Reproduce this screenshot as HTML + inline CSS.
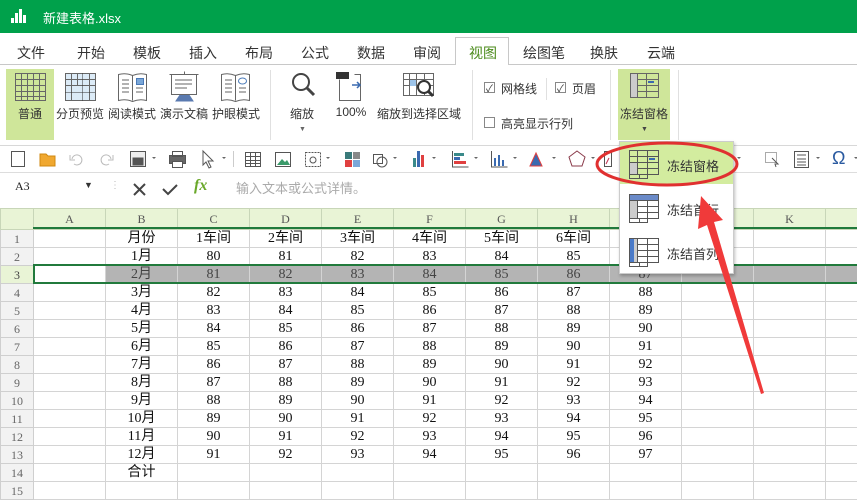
<!DOCTYPE html>
<html><head><meta charset="utf-8">
<style>
*{margin:0;padding:0;box-sizing:border-box}
body{width:857px;height:488px;overflow:hidden;background:#fff;font-family:"Liberation Sans","Noto Sans CJK SC",sans-serif;color:#333;position:relative}
.a{position:absolute}
.t{font-size:12px;color:#333;white-space:nowrap}
.tab{position:absolute;top:43px;font-size:14px;color:#333}
.lbl{position:absolute;top:105px;font-size:12px;white-space:nowrap;transform:translateX(-50%)}
table{position:absolute;left:0;top:208px;border-collapse:collapse;table-layout:fixed;width:897px}
td{border:1px solid #d4d4d4;height:18px;text-align:center;font-family:"Liberation Serif","Noto Sans CJK SC",serif;font-size:14px;color:#111;line-height:16px;padding:0;overflow:hidden}
tr.h td{height:21px;background:#e9f4d6;font-size:12px;color:#555;border-color:#c8d6b8}
td.rh{background:#f2f2f2;color:#666;font-size:12px;border-color:#cfcfcf}
tr.s td{background:#b4b4b4;color:#444}
tr.s td.w{background:#fff}
tr.s td.rh{background:#e9f4d6}
.ck{position:absolute;width:11px;height:11px;border:1px solid #888;background:#fff}
.sep{position:absolute;width:1px;background:#e0e0e0}
</style></head><body>
<div class="a" style="left:0;top:0;width:857px;height:33px;background:#00a14b"></div>
<svg class="a" style="left:11px;top:9px" width="18" height="14"><rect x="0" y="9" width="3" height="5" fill="#fff"/><rect x="4" y="4" width="3" height="10" fill="#fff"/><rect x="8" y="0" width="3" height="14" fill="#fff"/><rect x="12" y="6" width="3" height="8" fill="#fff"/></svg>
<div class="a" style="left:43px;top:8px;color:#fff;font-size:13px">新建表格.xlsx</div>
<div class="a" style="left:0;top:64px;width:857px;height:1px;background:#c8c8c8"></div>
<div class="a" style="left:455px;top:37px;width:54px;height:28px;background:#fff;border:1px solid #c8c8c8;border-bottom:none"></div>
<div class="tab" style="left:17px">文件</div><div class="tab" style="left:77px">开始</div><div class="tab" style="left:133px">模板</div><div class="tab" style="left:189px">插入</div><div class="tab" style="left:245px">布局</div><div class="tab" style="left:301px">公式</div><div class="tab" style="left:357px">数据</div><div class="tab" style="left:413px">审阅</div><div class="tab" style="left:469px;color:#4a8a1a">视图</div><div class="tab" style="left:523px">绘图笔</div><div class="tab" style="left:590px">换肤</div><div class="tab" style="left:647px">云端</div>
<div class="a" style="left:6px;top:69px;width:48px;height:71px;background:#cfe69a"></div>
<div class="a" style="left:618px;top:69px;width:52px;height:71px;background:#cfe69a"></div>
<div class="a" style="left:0;top:145px;width:857px;height:1px;background:#d8d8d8"></div>
<div class="sep" style="left:270px;top:70px;height:70px"></div>
<div class="sep" style="left:472px;top:70px;height:70px"></div>
<div class="sep" style="left:610px;top:70px;height:70px"></div>
<div class="sep" style="left:546px;top:78px;height:22px"></div>
<div class="sep" style="left:678px;top:70px;height:70px"></div>
<svg class="a" style="left:0;top:70px" width="857" height="36" fill="none" stroke="#666" stroke-width="1">
<g><rect x="15.5" y="3.5" width="30" height="27"/><path d="M15.5 9.5h30M15.5 15.5h30M15.5 21.5h30M15.5 26.5h30M21.5 3.5v27M27.5 3.5v27M33.5 3.5v27M39.5 3.5v27"/></g>
<g><rect x="65.5" y="3.5" width="30" height="27" fill="#dcebf7"/><path d="M65.5 9.5h30M65.5 15.5h30M71.5 3.5v27M89.5 3.5v27M77.5 3.5v12"/><path d="M65.5 22.5h30M82.5 3.5v27" stroke="#333" stroke-dasharray="1 1"/></g>
<g><path d="M118.5 4.5q7-2 14 1q7-3 14-1v26q-7-2-14 1q-7-3-14-1z"/><path d="M132.5 5.5v25M122 10h7M122 14h7M122 18h7M122 22h7M136 18h7M136 22h7"/><rect x="136.5" y="8.5" width="7" height="6" fill="#7aa7d8" stroke="#4a7ab8"/></g>
<g><path d="M169.5 4.5h29M171.5 4.5v20h25v-20M184.5 1.5v3M175 10h17M175 14h17M175 18h12"/><path d="M180 25l-4 6h17l-4-6" fill="#5a7ab0" stroke="#5a7ab0"/></g>
<g><path d="M221.5 4.5q7-2 14 1q7-3 14-1v26q-7-2-14 1q-7-3-14-1z"/><path d="M235.5 5.5v25M225 10h7M225 14h7M225 18h7M225 22h7M239 18h7M239 22h7"/><ellipse cx="242.5" cy="11" rx="4" ry="3" stroke="#4a7ab8"/></g>
<g stroke="#444" stroke-width="2"><circle cx="301" cy="12" r="8"/><path d="M307 18l7 7" stroke-width="3"/></g>
<g><rect x="336" y="2" width="13" height="7" fill="#333" stroke="none"/><path d="M339.5 9.5v21h21v-26h-6" /><path d="M352 15h8M357 12l3 3-3 3" stroke="#3a6ab0" stroke-width="1.5"/></g>
<g><rect x="403.5" y="3.5" width="30" height="22"/><path d="M403.5 9.5h30M403.5 15.5h30M409.5 3.5v22M416.5 3.5v22M424.5 3.5v22"/><rect x="410" y="10" width="6" height="6" fill="#9cc4ea" stroke="none"/><circle cx="424" cy="17" r="6" stroke="#333" stroke-width="2" fill="#fff"/><path d="M428 21l5 5" stroke="#333" stroke-width="3"/></g>
<g><rect x="630.5" y="3.5" width="28" height="24"/><path d="M630.5 9.5h28M630.5 15.5h28M630.5 21.5h28M637.5 3.5v24M646.5 3.5v24"/><rect x="630.5" y="3.5" width="7" height="24" fill="#ccc"/><path d="M648 12h6" stroke="#3a6ab0" stroke-width="2"/></g>
</svg>
<div class="lbl" style="left:30px">普通</div><div class="lbl" style="left:80px">分页预览</div><div class="lbl" style="left:132px">阅读模式</div><div class="lbl" style="left:184px">演示文稿</div><div class="lbl" style="left:236px">护眼模式</div>
<div class="lbl" style="left:302px">缩放</div><div class="lbl" style="left:351px">100%</div><div class="lbl" style="left:419px">缩放到选择区域</div><div class="lbl" style="left:644px">冻结窗格</div>
<div class="a" style="left:299px;top:126px;font-size:7px;color:#666">▼</div>
<div class="a" style="left:641px;top:126px;font-size:7px;color:#444">▼</div>
<div class="ck" style="left:484px;top:82px"></div><div class="a" style="left:486px;top:80px;font-size:10px">✓</div><div class="t a" style="left:501px;top:80px">网格线</div>
<div class="ck" style="left:555px;top:82px"></div><div class="a" style="left:557px;top:80px;font-size:10px">✓</div><div class="t a" style="left:572px;top:80px">页眉</div>
<div class="ck" style="left:484px;top:117px"></div><div class="t a" style="left:501px;top:115px">高亮显示行列</div>
<div class="a" style="left:0;top:172px;width:857px;height:1px;background:#ddd"></div>
<svg class="a" style="left:0;top:146px" width="857" height="26" fill="none" stroke="#555">
<path d="M11.5 5.5h13v15h-13z"/>
<path d="M40 8h6l2 2h7v10h-15z" fill="#f0a830" stroke="#d08810"/>
<path d="M72 13a5 5 0 1 1 2 5M70 9v5h5" stroke="#bbb"/><path d="M111 13a5 5 0 1 0-2 5M113 9v5h-5" stroke="#bbb"/>
<rect x="130.5" y="5.5" width="15" height="15" fill="#eee"/><rect x="133" y="12" width="10" height="7" fill="#555"/>
<path d="M152 11l2 2 2-2" fill="#666" stroke="none"/>
<rect x="169.5" y="9.5" width="16" height="8" fill="#666"/><rect x="172.5" y="5.5" width="10" height="5"/><rect x="172.5" y="15.5" width="10" height="6" fill="#fff"/>
<path d="M203 5l10 10h-5l3 6-2 1-3-6-3 3z"/><path d="M222 11l2 2 2-2" fill="#666" stroke="none"/>
<path d="M233.5 5v16" stroke="#ccc"/>
<rect x="245.5" y="6.5" width="15" height="14"/><path d="M245.5 10.5h15M245.5 14.5h15M245.5 17.5h15M250.5 6.5v14M255.5 6.5v14"/>
<rect x="275.5" y="6.5" width="15" height="14"/><path d="M277 19l5-6 3 3 2-2 3 5z" fill="#3a9a6a" stroke="none"/>
<rect x="305.5" y="6.5" width="15" height="14" stroke-dasharray="2 1"/><circle cx="313" cy="14" r="3"/><path d="M326 11l2 2 2-2" fill="#666" stroke="none"/>
<rect x="345" y="6" width="7" height="7" fill="#3a7a7a" stroke="none"/><rect x="353" y="6" width="7" height="7" fill="#888" stroke="none"/><rect x="345" y="14" width="7" height="7" fill="#e04040" stroke="none"/><rect x="353" y="14" width="7" height="7" fill="#7aa7d8" stroke="none"/>
<rect x="373.5" y="8.5" width="9" height="9"/><circle cx="382" cy="16" r="5"/><path d="M393 11l2 2 2-2" fill="#666" stroke="none"/>
<rect x="413" y="12" width="3" height="9" fill="#3a8a8a" stroke="none"/><rect x="417" y="5" width="3" height="16" fill="#3a6ab0" stroke="none"/><rect x="421" y="9" width="3" height="12" fill="#e04040" stroke="none"/><path d="M432 11l2 2 2-2" fill="#666" stroke="none"/>
<path d="M452.5 5v16h16"/><rect x="454" y="7" width="10" height="3" fill="#3a8a8a" stroke="none"/><rect x="454" y="11" width="6" height="3" fill="#3a6ab0" stroke="none"/><rect x="454" y="15" width="12" height="3" fill="#e04040" stroke="none"/><path d="M474 11l2 2 2-2" fill="#666" stroke="none"/>
<path d="M491.5 5v16h16"/><rect x="494" y="12" width="2" height="8" fill="#3a6ab0" stroke="none"/><rect x="498" y="9" width="2" height="11" fill="#3a6ab0" stroke="none"/><rect x="502" y="14" width="2" height="6" fill="#3a6ab0" stroke="none"/><path d="M513 11l2 2 2-2" fill="#666" stroke="none"/>
<path d="M530 20l6-13 6 13z" fill="#3a6ab0" stroke="#e04040"/><path d="M552 11l2 2 2-2" fill="#666" stroke="none"/>
<path d="M577 5l8 6-3 9h-10l-3-9z" stroke="#8a3a4a"/><path d="M591 11l2 2 2-2" fill="#666" stroke="none"/>
<path d="M604.5 5.5h7v15h-7z"/><path d="M606 18l3-6" stroke="#c03050"/>
<path d="M737 11l2 2 2-2" fill="#666" stroke="none"/>
<rect x="765.5" y="6.5" width="11" height="10" stroke-dasharray="1 1"/><path d="M772 12l6 6-3 0 1 3" />
<rect x="794.5" y="5.5" width="14" height="16"/><path d="M797 9h9M797 13h9M797 16h9M797 19h9"/><path d="M816 11l2 2 2-2" fill="#666" stroke="none"/>
<path d="M854 11l2 2 2-2" fill="#666" stroke="none"/>
</svg>
<div class="a" style="left:832px;top:148px;font-size:18px;color:#2a5aa0">Ω</div>
<div class="a" style="left:15px;top:179px;font-size:12px;color:#222;font-family:'Liberation Serif',serif">A3</div>
<div class="a" style="left:84px;top:180px;font-size:9px;color:#333">▼</div>
<div class="a" style="left:110px;top:180px;font-size:10px;color:#bbb">⋮</div>
<svg class="a" style="left:130px;top:180px" width="80" height="18"><path d="M4 4l11 11M15 4l-11 11" stroke="#444" stroke-width="2"/><path d="M33 9l5 5 9-9" stroke="#444" stroke-width="2" fill="none"/></svg>
<div class="a" style="left:194px;top:177px;font-size:16px;color:#6aa82a;font-style:italic;font-weight:bold;font-family:'Liberation Serif',serif">fx</div>
<div class="a" style="left:236px;top:178px;font-size:13px;color:#aaa">输入文本或公式详情。</div>
<table>
<colgroup><col style="width:33px"><col style="width:72px"><col style="width:72px"><col style="width:72px"><col style="width:72px"><col style="width:72px"><col style="width:72px"><col style="width:72px"><col style="width:72px"><col style="width:72px"><col style="width:72px"><col style="width:72px"><col style="width:72px"></colgroup>
<tr class="h"><td class="rh"></td><td>A</td><td>B</td><td>C</td><td>D</td><td>E</td><td>F</td><td>G</td><td>H</td><td>I</td><td>J</td><td>K</td><td></td></tr>
<tr><td class="rh">1</td><td></td><td>月份</td><td>1车间</td><td>2车间</td><td>3车间</td><td>4车间</td><td>5车间</td><td>6车间</td><td>7车间</td><td></td><td></td><td></td></tr>
<tr><td class="rh">2</td><td></td><td>1月</td><td>80</td><td>81</td><td>82</td><td>83</td><td>84</td><td>85</td><td>86</td><td></td><td></td><td></td></tr>
<tr class="s"><td class="rh">3</td><td class="w"></td><td>2月</td><td>81</td><td>82</td><td>83</td><td>84</td><td>85</td><td>86</td><td>87</td><td></td><td></td><td></td></tr>
<tr><td class="rh">4</td><td></td><td>3月</td><td>82</td><td>83</td><td>84</td><td>85</td><td>86</td><td>87</td><td>88</td><td></td><td></td><td></td></tr>
<tr><td class="rh">5</td><td></td><td>4月</td><td>83</td><td>84</td><td>85</td><td>86</td><td>87</td><td>88</td><td>89</td><td></td><td></td><td></td></tr>
<tr><td class="rh">6</td><td></td><td>5月</td><td>84</td><td>85</td><td>86</td><td>87</td><td>88</td><td>89</td><td>90</td><td></td><td></td><td></td></tr>
<tr><td class="rh">7</td><td></td><td>6月</td><td>85</td><td>86</td><td>87</td><td>88</td><td>89</td><td>90</td><td>91</td><td></td><td></td><td></td></tr>
<tr><td class="rh">8</td><td></td><td>7月</td><td>86</td><td>87</td><td>88</td><td>89</td><td>90</td><td>91</td><td>92</td><td></td><td></td><td></td></tr>
<tr><td class="rh">9</td><td></td><td>8月</td><td>87</td><td>88</td><td>89</td><td>90</td><td>91</td><td>92</td><td>93</td><td></td><td></td><td></td></tr>
<tr><td class="rh">10</td><td></td><td>9月</td><td>88</td><td>89</td><td>90</td><td>91</td><td>92</td><td>93</td><td>94</td><td></td><td></td><td></td></tr>
<tr><td class="rh">11</td><td></td><td>10月</td><td>89</td><td>90</td><td>91</td><td>92</td><td>93</td><td>94</td><td>95</td><td></td><td></td><td></td></tr>
<tr><td class="rh">12</td><td></td><td>11月</td><td>90</td><td>91</td><td>92</td><td>93</td><td>94</td><td>95</td><td>96</td><td></td><td></td><td></td></tr>
<tr><td class="rh">13</td><td></td><td>12月</td><td>91</td><td>92</td><td>93</td><td>94</td><td>95</td><td>96</td><td>97</td><td></td><td></td><td></td></tr>
<tr><td class="rh">14</td><td></td><td>合计</td><td></td><td></td><td></td><td></td><td></td><td></td><td></td><td></td><td></td><td></td></tr>
<tr><td class="rh">15</td><td></td><td></td><td></td><td></td><td></td><td></td><td></td><td></td><td></td><td></td><td></td><td></td></tr>
</table>
<div class="a" style="left:33px;top:227px;width:824px;height:2px;background:#217a3c"></div>
<div class="a" style="left:33px;top:264px;width:830px;height:20px;border:2px solid #217a3c"></div>
<div class="a" style="left:619px;top:141px;width:115px;height:133px;background:#fff;border:1px solid #ccc;box-shadow:1px 2px 3px rgba(0,0,0,.25)"></div>
<div class="a" style="left:620px;top:142px;width:113px;height:42px;background:#d3ec9f"></div>
<svg class="a" style="left:619px;top:141px" width="115" height="133" fill="none" stroke="#555">
<g><rect x="10.5" y="9.5" width="29" height="24"/><path d="M10.5 15.5h29M10.5 21.5h29M10.5 27.5h29M18.5 9.5v24M28.5 9.5v24"/><path d="M10.5 33.5v4h10v-4M20.5 33.5v4h8v-4"/><rect x="11" y="22" width="7" height="11" fill="#ccc" stroke="none"/><path d="M30 18h6" stroke="#3a6ab0" stroke-width="2"/></g>
<g transform="translate(0,44)"><rect x="10.5" y="9.5" width="29" height="24"/><path d="M10.5 15.5h29M10.5 21.5h29M10.5 27.5h29M18.5 9.5v24M28.5 9.5v24"/><rect x="11" y="10" width="28" height="5" fill="#6a8ac8" stroke="none"/><rect x="11" y="16" width="7" height="17" fill="#ccc" stroke="none"/><path d="M10.5 33.5v4h10v-4M20.5 33.5v4h8v-4"/></g>
<g transform="translate(0,88)"><rect x="10.5" y="9.5" width="29" height="24"/><path d="M10.5 15.5h29M10.5 21.5h29M10.5 27.5h29M18.5 9.5v24M28.5 9.5v24"/><rect x="11" y="10" width="4" height="23" fill="#4a7ac8" stroke="none"/><rect x="15" y="10" width="3" height="23" fill="#ccc" stroke="none"/><path d="M10.5 33.5v4h10v-4M20.5 33.5v4h8v-4"/></g>
</svg>
<div class="a t" style="left:667px;top:156px;font-size:13px">冻结窗格</div>
<div class="a t" style="left:667px;top:200px;font-size:13px">冻结首行</div>
<div class="a t" style="left:667px;top:244px;font-size:13px">冻结首列</div>
<svg class="a" style="left:0;top:0" width="857" height="488">
<ellipse cx="667" cy="164" rx="70" ry="21" fill="none" stroke="#e03030" stroke-width="3"/>
<path d="M701 196l22 24-9 2 50 171-3 1-54-169-9 4z" fill="#f03a3a"/>
</svg>
</body></html>
